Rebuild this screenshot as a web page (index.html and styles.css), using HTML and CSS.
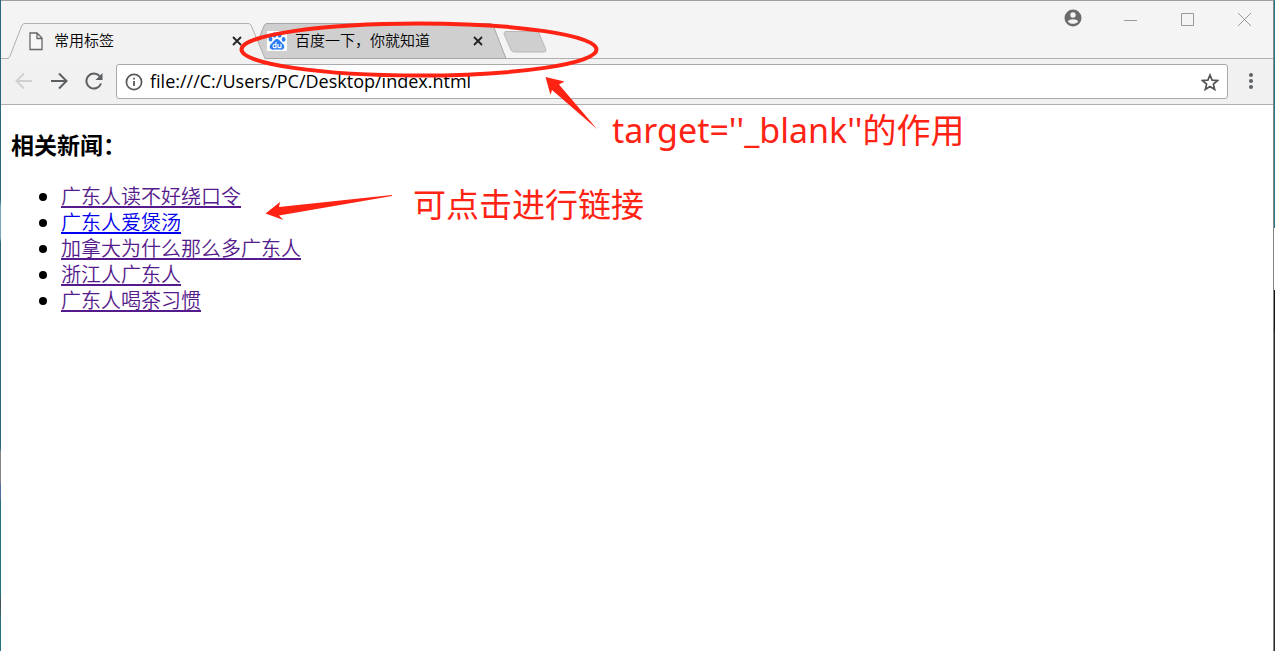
FILE: index.html
```html
<!DOCTYPE html>
<html lang="zh-CN">
<head>
<meta charset="utf-8">
<title>常用标签</title>
<link rel="stylesheet" href="styles.css">
</head>
<body>
<div class="desktop">
  <div class="window">
    <header class="titlebar">
      <div class="tabs">
        <div class="tab tab-active">
          <svg class="tab-shape" viewBox="0 0 258 36" aria-hidden="true"><path d="M0 35.500Q1 35 2 33L14 2Q15 .5 17 .5H240Q242 .5 243 2L257 35.500V36H0Z" fill="#f2f2f2"/><path d="M0 35.500Q1 35 2 33L14 2Q15 .5 17 .5H240Q242 .5 243 2L257 35.500" fill="none" stroke="#b0b0b0"/></svg>
          <svg class="tab-icon" viewBox="0 0 20 20" aria-hidden="true"><path d="M4 2H11L16 7V18.500H4ZM11 2V7.500H16" fill="#f8f8f8" stroke="#666" stroke-width="1.300"/></svg>
          <span class="tab-title">常用标签</span>
          <button class="tab-close" aria-label="关闭标签页"><svg viewBox="0 0 10 10"><path d="M1 1L9 9M9 1L1 9"/></svg></button>
        </div>
        <div class="tab tab-back">
          <svg class="tab-shape" viewBox="0 0 258 36" aria-hidden="true"><path d="M2 35.500L15 3Q16 .5 18 .5H241Q243 .5 244 2L257 35.500Z" fill="#cfcfcf" stroke="#a6a6a6"/></svg>
          <svg class="tab-icon" viewBox="0 0 20 20" aria-hidden="true"><path d="M0 0H20V20H0Z" fill="#fff"/><g fill="#2b7df5"><ellipse cx="3.500" cy="8" rx="1.900" ry="2.500"/><ellipse cx="7.500" cy="4" rx="2" ry="2.700"/><ellipse cx="12.600" cy="4" rx="2" ry="2.700"/><ellipse cx="16.600" cy="8.400" rx="1.900" ry="2.400"/><path d="M10 8C12 8 13 10 14.500 11.500C16.500 13.500 18 14.500 17 17C16 19.500 13 18.500 10 18.500C7 18.500 4 19.500 3 17C2 14.500 4 13 5.500 11.500C7 10 8 8 10 8Z"/></g><path d="M9 11V17M9 13.500H7.500Q6 13.500 6 15.200Q6 16.700 7.500 16.700H9M11 13V15.700Q11 16.700 12 16.700H14V13" fill="none" stroke="#fff" stroke-width="1.200"/></svg>
          <span class="tab-title">百度一下，你就知道</span>
          <button class="tab-close" aria-label="关闭标签页"><svg viewBox="0 0 10 10"><path d="M1 1L9 9M9 1L1 9"/></svg></button>
        </div>
        <button class="new-tab" aria-label="新标签页"><svg viewBox="0 0 44 22"><path d="M3 .5H33Q35 .5 36 2L43 19Q43 21 41 21H11Q9 21 8 19L1 3Q1 .5 3 .5Z" fill="#cfcfcf" stroke="#b8b8b8"/></svg></button>
      </div>
      <div class="controls">
        <button class="control" aria-label="用户"><svg viewBox="0 0 18 18"><circle cx="9" cy="9" r="8.500" fill="#6b6b6b"/><circle cx="9" cy="6" r="2.700" fill="#f4f4f4"/><path d="M3.800 12.200C5.500 9.500 12.500 9.500 14.200 12.200C12 15.700 6 15.700 3.800 12.200Z" fill="#f4f4f4"/></svg></button>
        <button class="control" aria-label="最小化"><svg viewBox="0 0 18 18"><path d="M3 11.500H16" stroke="#999"/></svg></button>
        <button class="control" aria-label="最大化"><svg viewBox="0 0 18 18"><path d="M3.500 4.500H15.500V16.500H3.500Z" fill="none" stroke="#999"/></svg></button>
        <button class="control" aria-label="关闭"><svg viewBox="0 0 18 18"><path d="M3 4L16 17M16 4L3 17" stroke="#999"/></svg></button>
      </div>
    </header>
    <div class="toolbar">
      <button class="nav nav-off" aria-label="后退"><svg viewBox="0 0 18 18"><path d="M17 9H2M9 1.500L1.500 9L9 16.500"/></svg></button>
      <button class="nav" aria-label="前进"><svg viewBox="0 0 18 18"><path d="M1 9H16M9 1.500L16.500 9L9 16.500"/></svg></button>
      <button class="nav" aria-label="重新加载"><svg viewBox="0 0 18 18"><path d="M16 11.500A7.500 7.500 0 1 1 14.500 4"/><path d="M17.500 1V8H10.500Z" fill="#5c5f62" stroke="none"/></svg></button>
      <div class="address">
        <svg class="info" viewBox="0 0 18 18" aria-hidden="true"><circle cx="9" cy="9" r="7.600" fill="none" stroke="#5a5a5a" stroke-width="1.700"/><path d="M9 8V13M9 4.800V6.600" stroke="#5a5a5a" stroke-width="1.800"/></svg>
        <input class="url" aria-label="地址" value="file:///C:/Users/PC/Desktop/index.html">
        <button class="star" aria-label="收藏"><svg viewBox="0 0 18 18"><path d="M9 2L11.100 7.100L16.600 7.500L12.400 11.100L13.700 16.500L9 13.600L4.300 16.500L5.600 11.100L1.400 7.500L6.900 7.100Z" fill="none" stroke="#555" stroke-width="1.700"/></svg></button>
      </div>
      <button class="menu" aria-label="菜单"><svg viewBox="0 0 6 18"><g fill="#5f6266"><circle cx="3" cy="3" r="2"/><circle cx="3" cy="9" r="2"/><circle cx="3" cy="15" r="2"/></g></svg></button>
    </div>
    <main class="page">
      <h3 class="heading">相关新闻：</h3>
      <ul class="news">
        <li><a class="link visited" href="#" target="_blank">广东人读不好绕口令</a></li>
        <li><a class="link" href="#" target="_blank">广东人爱煲汤</a></li>
        <li><a class="link visited" href="#" target="_blank">加拿大为什么那么多广东人</a></li>
        <li><a class="link visited" href="#" target="_blank">浙江人广东人</a></li>
        <li><a class="link visited" href="#" target="_blank">广东人喝茶习惯</a></li>
      </ul>
    </main>
  </div>
  <svg class="marks" width="620" height="240" viewBox="0 0 620 240" aria-hidden="true">
    <ellipse cx="419" cy="49.500" rx="177.500" ry="26" fill="none" stroke="#ff2314" stroke-width="4"/>
    <path d="M545.500 77L564.500 81.500L559 84.500L597 129L552 90L550.500 95Z" fill="#ff2314"/>
    <path d="M265.500 213.500L280 202L279 207L392 195L392 196L279 215.500L283.500 220Z" fill="#ff2314"/>
  </svg>
  <p class="note note-target">target=''_blank''的作用</p>
  <p class="note note-click">可点击进行链接</p>
</div>
</body>
</html>
```
FILE: styles.css
```css
* { box-sizing: border-box; }

body {
  margin: 0;
  font-family: "Open Sans", "Noto Sans CJK SC", sans-serif;
  color: #000;
}

button {
  display: flex;
  align-items: center;
  justify-content: center;
  padding: 0;
  border: 0;
  background: none;
}

svg { display: block; flex: none; }

.desktop {
  position: relative;
  display: flex;
  min-height: 100vh;
  padding: 0 1px;
  background:
    linear-gradient(#25798b 0 228px, #fff 228px 290px, #17171a 290px 332px, #2d2d26 332px) right / 50% 100% no-repeat,
    linear-gradient(#29687b 0 200px, #77a6b4 206px 238px, #29687b 242px 448px, #858585 452px 480px, #526da0 486px 498px, #28717c 502px 594px, #4b4b50 604px, #28717c 620px);
  overflow: hidden;
}

.window {
  flex: 1;
  display: flex;
  flex-direction: column;
  border-top: 1px solid #a0a0a0;
  border-right: 1px solid #858585;
  background: #fff;
}

.titlebar {
  display: flex;
  justify-content: space-between;
  align-items: flex-start;
  height: 58px;
  padding-left: 7px;
  background: linear-gradient(#b0b0b0, #b0b0b0) bottom / 100% 1px no-repeat #f4f4f4;
}

.tabs { display: flex; padding-top: 22px; }

.tab {
  position: relative;
  display: flex;
  align-items: center;
  width: 258px;
  height: 36px;
  padding: 0 22px 0 18px;
  font-family: "Noto Sans CJK SC", sans-serif;
  font-size: 15px;
}

.tab-active { z-index: 1; }

.tab-back { margin-left: -17px; }

.tab-shape { position: absolute; inset: 0; width: 100%; height: 100%; }

.tab-icon { position: relative; width: 20px; height: 20px; }

.tab-title { position: relative; flex: 1; padding: 0 0 2px 8px; font-weight: 350; line-height: 20px; }

.tab-close { position: relative; width: 14px; height: 20px; }

.tab-close svg { width: 10px; height: 10px; }

.tab-close path { stroke: #222; stroke-width: 1.8; }

.new-tab { width: 44px; height: 22px; margin-top: 8px; margin-left: -4px; }

.new-tab svg { width: 44px; height: 22px; }

.controls { display: flex; gap: 39px; padding: 8px 20px 0 0; }

.control svg { width: 18px; height: 18px; }

.toolbar {
  display: flex;
  align-items: center;
  height: 46px;
  padding: 0 16px 0 14px;
  gap: 17px;
  border-bottom: 1px solid #b0b0b0;
  background: #f1f1f1;
}

.nav, .menu { padding-bottom: 2px; }

.nav svg { width: 18px; height: 18px; fill: none; stroke: #5c5f62; stroke-width: 2; }

.nav-off svg { stroke: #d0d0d0; }

.address {
  flex: 1;
  display: flex;
  align-items: center;
  height: 35px;
  margin-left: -4px;
  padding: 0 8px;
  border: 1px solid #aaa;
  border-radius: 3px;
  background: #fff;
}

.info { width: 18px; height: 18px; }

.url {
  flex: 1;
  min-width: 0;
  padding: 0 7px 2px;
  border: 0;
  outline: 0;
  background: none;
  font-family: "Open Sans", sans-serif;
  font-size: 18px;
  color: #000;
}

.star svg { width: 18px; height: 18px; }

.menu { width: 12px; }

.menu svg { width: 6px; height: 18px; }

.page { padding: 22px 10px; }

.heading {
  margin: 0;
  font-family: "Noto Sans CJK SC", sans-serif;
  font-size: 23px;
  line-height: 34px;
}

.news {
  margin: 22px 0 0;
  padding-left: 50px;
  font-family: "Noto Sans CJK SC", sans-serif;
  font-size: 20px;
  line-height: 26px;
}

.link {
  font-weight: 350;
  color: #00e;
  text-decoration: underline;
  text-decoration-thickness: 2px;
  text-decoration-skip-ink: none;
  text-underline-offset: 2px;
}

.visited { color: #551a8b; }

.marks { position: absolute; left: 0; top: 0; z-index: 2; pointer-events: none; }

.note {
  position: absolute;
  z-index: 2;
  margin: 0;
  font-family: "Noto Sans", "Noto Sans CJK SC", sans-serif;
  font-size: 33px;
  line-height: 44px;
  white-space: nowrap;
  color: #ff2314;
}

.note-target { left: 612px; top: 108px; font-size: 34px; }

.note-click { left: 413px; top: 183px; }
```
